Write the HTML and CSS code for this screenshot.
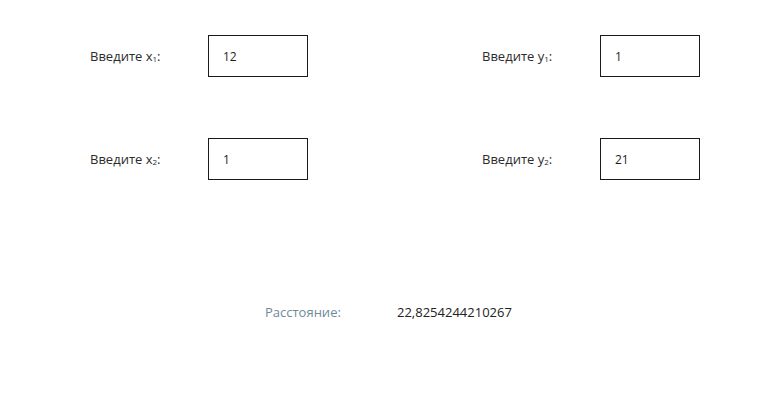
FILE: index.html
```html
<!DOCTYPE html>
<html lang="ru">
<head>
<meta charset="utf-8">
<link rel="stylesheet" href="styles.css">
</head>
<body>
<div class="page">
  <div class="inputs">
    <div class="field">
      <span class="label">Введите x<sub>1</sub>:</span>
      <div class="box">12</div>
    </div>
    <div class="field">
      <span class="label">Введите y<sub>1</sub>:</span>
      <div class="box">1</div>
    </div>
    <div class="field">
      <span class="label">Введите x<sub>2</sub>:</span>
      <div class="box">1</div>
    </div>
    <div class="field">
      <span class="label">Введите y<sub>2</sub>:</span>
      <div class="box">21</div>
    </div>
  </div>
  <div class="result">
    <span class="result-label">Расстояние:</span>
    <span class="result-value">22,8254244210267</span>
  </div>
</div>
</body>
</html>
```
FILE: styles.css
```css
html, body {
  margin: 0;
  background: #ffffff;
}
body {
  font-family: "Open Sans", "Noto Sans", sans-serif;
  font-size: 13px;
  color: #222222;
}
.page {
  width: 777px;
  height: 412px;
  padding-top: 35px;
  box-sizing: border-box;
}
.inputs {
  display: grid;
  grid-template-columns: 218px 218px;
  column-gap: 174px;
  row-gap: 61px;
  padding-left: 90px;
}
.field {
  display: flex;
  align-items: center;
}
.label {
  width: 118px;
  color: #2b2b2b;
}
.label sub {
  font-size: 8px;
  vertical-align: -1px;
}
.box {
  width: 100px;
  height: 42px;
  box-sizing: border-box;
  border: 1px solid #1a1a1a;
  display: flex;
  align-items: center;
  padding-left: 14px;
  color: #1e1e1e;
  font-size: 12px;
}
.result {
  display: flex;
  margin-top: 123px;
  padding-left: 265px;
}
.result-label {
  width: 132px;
  color: #6f8a9a;
}
.result-value {
  color: #222222;
}
```
